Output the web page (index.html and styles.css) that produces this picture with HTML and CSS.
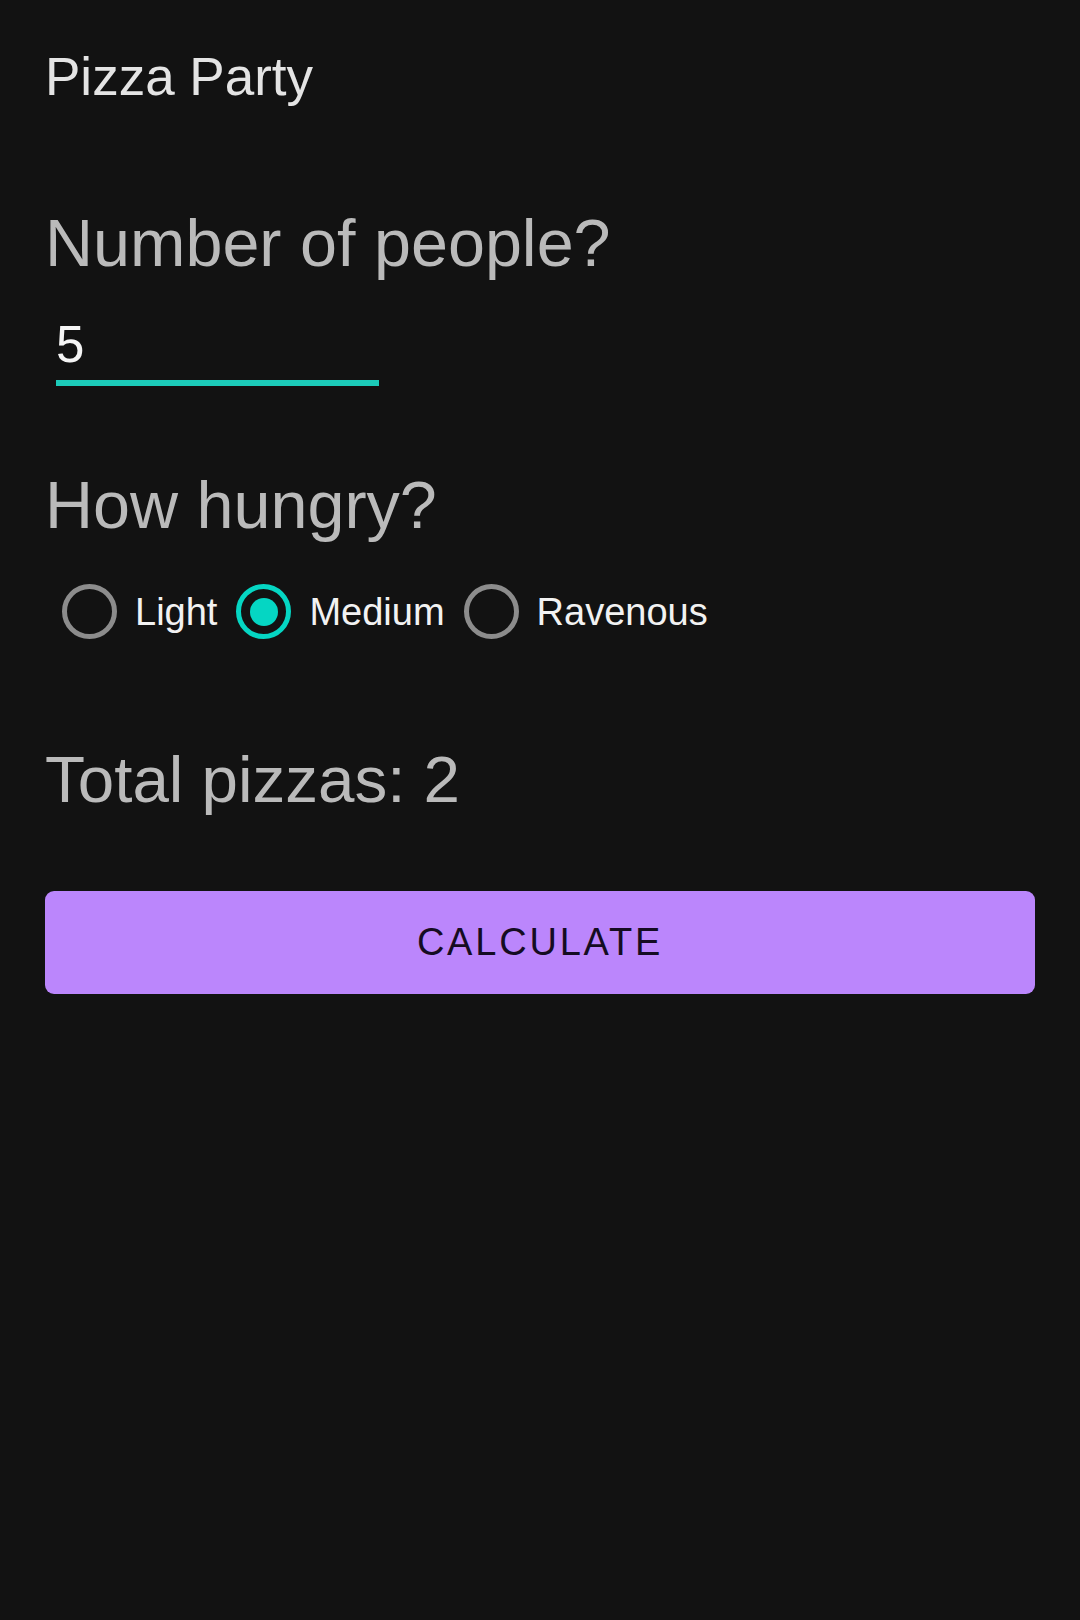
FILE: index.html
```html
<!DOCTYPE html>
<html lang="en">
<head>
<meta charset="utf-8">
<title>Pizza Party</title>
<link rel="stylesheet" href="styles.css">
</head>
<body>
<main class="app">
  <h1 class="title">Pizza Party</h1>

  <div class="question">Number of people?</div>
  <div class="field"><span class="field-value">5</span></div>

  <div class="question question-hungry">How hungry?</div>
  <div class="radios">
    <label class="radio">
      <span class="radio-circle"></span>
      <span class="radio-label">Light</span>
    </label>
    <label class="radio">
      <span class="radio-circle checked"><span class="radio-dot"></span></span>
      <span class="radio-label">Medium</span>
    </label>
    <label class="radio">
      <span class="radio-circle"></span>
      <span class="radio-label">Ravenous</span>
    </label>
  </div>

  <div class="total">Total pizzas: 2</div>

  <button class="calc-btn" type="button">CALCULATE</button>
</main>
</body>
</html>
```

FILE: styles.css
```css
html, body {
  margin: 0;
  padding: 0;
  background: #121212;
}

body {
  font-family: "Liberation Sans", Arial, sans-serif;
  min-height: 1620px;
}

.app {
  padding: 50px 45px 0 45px;
  display: flex;
  flex-direction: column;
}

.title {
  margin: 0;
  font-size: 53px;
  font-weight: 400;
  line-height: 1;
  color: #e4e4e4;
}

.question {
  margin-top: 107px;
  font-size: 66.5px;
  line-height: 1;
  color: #bababa;
}

.field {
  margin-top: 42px;
  margin-left: 11px;
  width: 323px;
  padding-bottom: 10px;
  border-bottom: 6px solid #1ccbb9;
}

.field-value {
  display: block;
  font-size: 51px;
  line-height: 1;
  color: #f4f4f4;
}

.question-hungry {
  margin-top: 86px;
}

.radios {
  margin-top: 46px;
  padding-left: 17px;
  display: flex;
  align-items: center;
  gap: 19px;
}

.radio {
  display: flex;
  align-items: center;
  gap: 18px;
}

.radio-circle {
  width: 55px;
  height: 55px;
  box-sizing: border-box;
  border: 5px solid #8c8c8c;
  border-radius: 50%;
  display: flex;
  align-items: center;
  justify-content: center;
}

.radio-circle.checked {
  border-color: #05d6c3;
}

.radio-dot {
  width: 28px;
  height: 28px;
  border-radius: 50%;
  background: #05d6c3;
}

.radio-label {
  font-size: 38px;
  line-height: 1;
  color: #f2f2f2;
}

.total {
  margin-top: 108px;
  font-size: 65.5px;
  line-height: 1;
  color: #bababa;
}

.calc-btn {
  margin-top: 78px;
  height: 103px;
  width: 100%;
  border: 0;
  border-radius: 9px;
  background: #bb86fc;
  color: #150c22;
  font-family: "Liberation Sans", Arial, sans-serif;
  font-size: 38px;
  line-height: 1;
  letter-spacing: 2.8px;
  padding: 0;
  display: flex;
  align-items: center;
  justify-content: center;
}
```
